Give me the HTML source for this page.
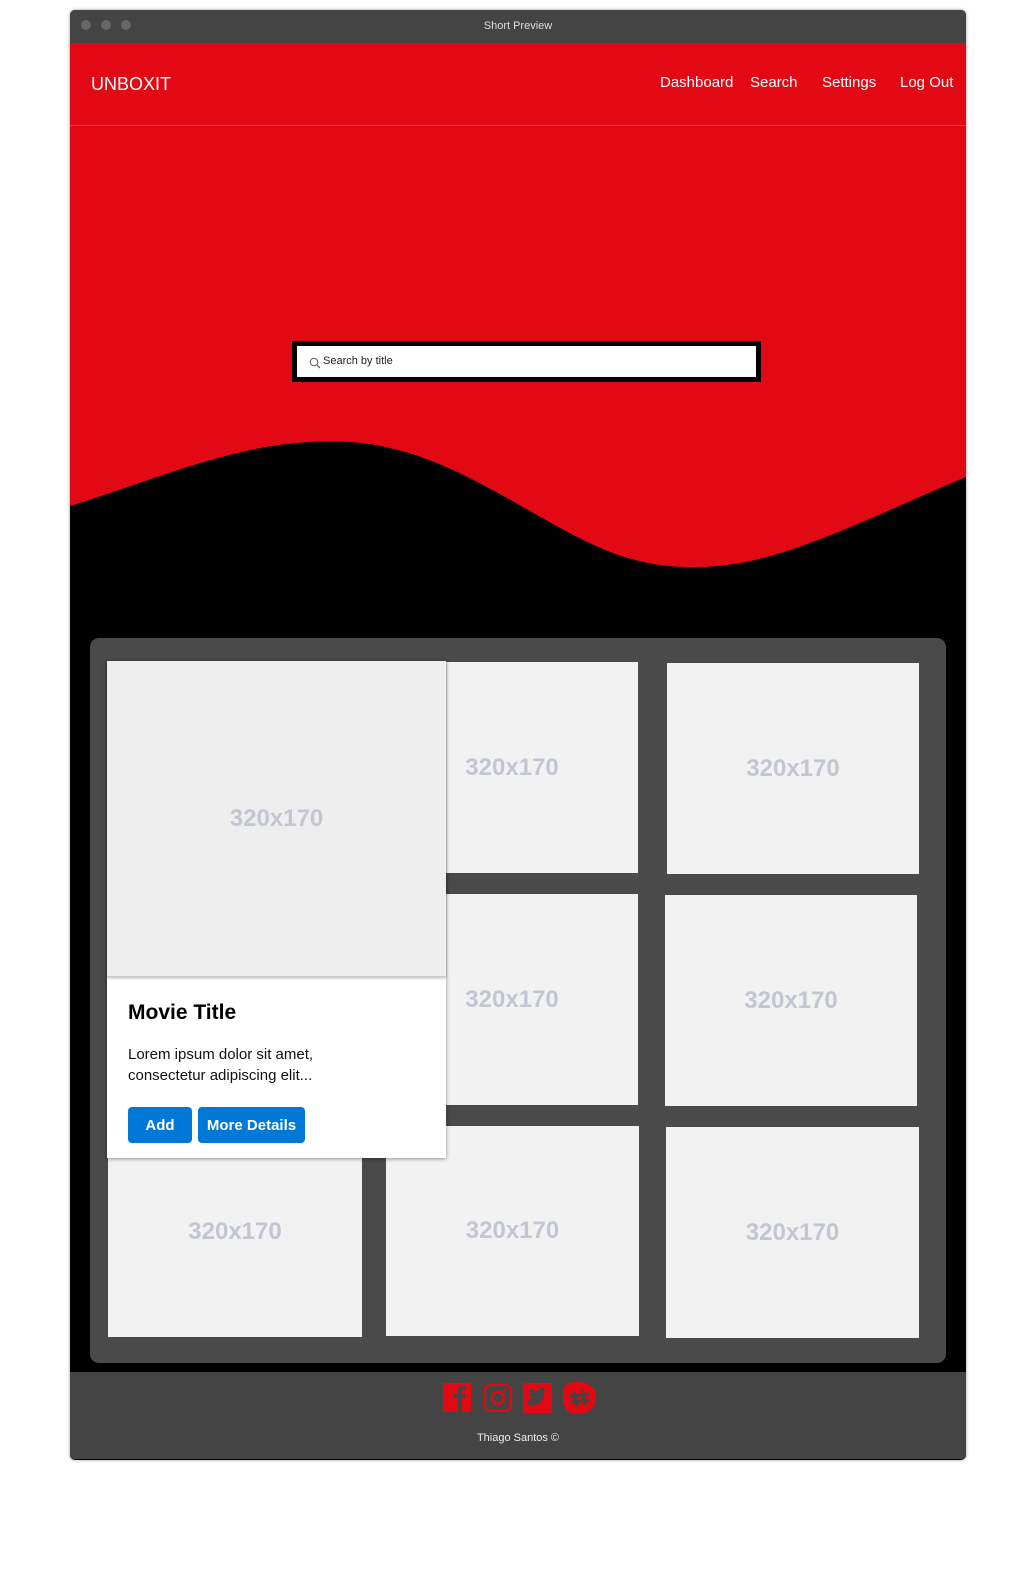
<!DOCTYPE html>
<html><head><meta charset="utf-8"><style>
*{margin:0;padding:0;box-sizing:border-box}
body{width:1021px;height:1575px;background:#fff;position:relative;font-family:"Liberation Sans",sans-serif;overflow:hidden}
.abs{position:absolute}
.frame{left:70px;top:10px;width:896px;height:1450px;background:#000;border-radius:5px;overflow:hidden;box-shadow:0 0 3px rgba(0,0,0,.4)}
.tb{left:0;top:0;width:896px;height:33px;background:#444}
.dot{width:10px;height:10px;border-radius:50%;background:#666;top:10px}
.nav{color:#fff;font-size:15px;top:74px}
.card{background:#f2f2f2;color:#c2c6d0;font-weight:bold;font-size:24px;display:flex;align-items:center;justify-content:center}
.btn{background:#0078d7;color:#fff;font-weight:bold;font-size:15px;border-radius:4px;display:flex;align-items:center;justify-content:center;height:36px;top:1107px}
</style></head><body>
<div class="abs frame">
 <div class="abs tb"></div>
 <div class="abs dot" style="left:11px"></div><div class="abs dot" style="left:31px"></div><div class="abs dot" style="left:51px"></div>
 <div class="abs" style="left:0;top:10px;width:896px;text-align:center;color:#ddd;font-size:11px">Short Preview</div>
 <div class="abs" style="left:0;top:33px;width:896px;height:595px;background:#e30914"></div>
 <div class="abs" style="left:0;top:115px;width:896px;height:1px;background:#c44"></div>
 <svg class="abs" style="left:0;top:420px" width="896" height="210" viewBox="0 0 896 210"><path d="M0 76 C100 45 180 6 280 12 C380 18 460 90 540 122 C600 145 660 140 720 120 C780 100 840 70 896 47 L896 210 L0 210Z" fill="#000"/></svg>
</div>
<div class="abs" style="left:91px;top:74px;color:#fff;font-size:18px">UNBOXIT</div>
<div class="abs nav" style="left:660px">Dashboard</div>
<div class="abs nav" style="left:750px">Search</div>
<div class="abs nav" style="left:822px">Settings</div>
<div class="abs nav" style="left:900px">Log Out</div>
<div class="abs" style="left:292px;top:341px;width:469px;height:41px;border:5px solid #000;background:#fff;font-size:11px;padding:9px 0 0 26px;color:#222">Search by title
 <svg class="abs" style="left:12px;top:11px" width="12" height="12" viewBox="0 0 12 12"><circle cx="5" cy="5" r="3.8" fill="none" stroke="#555" stroke-width="1"/><path d="M8 8 L11 11" stroke="#555" stroke-width="1.2"/></svg></div>
<div class="abs" style="left:90px;top:638px;width:856px;height:725px;background:#4a4a4a;border-radius:9px"></div>
<div class="abs card" style="left:386px;top:662px;width:252px;height:211px">320x170</div>
<div class="abs card" style="left:667px;top:663px;width:252px;height:211px">320x170</div>
<div class="abs card" style="left:386px;top:894px;width:252px;height:211px">320x170</div>
<div class="abs card" style="left:665px;top:895px;width:252px;height:211px">320x170</div>
<div class="abs card" style="left:108px;top:1126px;width:254px;height:211px">320x170</div>
<div class="abs card" style="left:386px;top:1126px;width:253px;height:210px">320x170</div>
<div class="abs card" style="left:666px;top:1127px;width:253px;height:211px">320x170</div>
<div class="abs" style="left:107px;top:661px;width:339px;height:497px;background:#fff;box-shadow:0 1px 4px rgba(0,0,0,.4)"></div>
<div class="abs card" style="left:107px;top:661px;width:339px;height:316px;background:#eee;border-bottom:1px solid #ccc;box-shadow:0 1px 3px rgba(0,0,0,.3)">320x170</div>
<div class="abs" style="left:128px;top:1001px;font-size:21px;font-weight:bold;color:#000">Movie Title</div>
<div class="abs" style="left:128px;top:1044px;font-size:15px;line-height:21px;color:#111">Lorem ipsum dolor sit amet,<br>consectetur adipiscing elit...</div>
<div class="abs btn" style="left:128px;width:64px">Add</div>
<div class="abs btn" style="left:198px;width:107px">More Details</div>
<div class="abs" style="left:70px;top:1372px;width:896px;height:87px;background:#444;border-radius:0 0 4px 4px"></div>
<svg class="abs" style="left:443px;top:1380px" width="155" height="35" viewBox="0 0 155 35">
 <rect x="0" y="3" width="28" height="29" fill="#e30914"/><path d="M15 32 V18 H11 V14 H15 V10 C15 7 17 6 20 6 H23 V10 H20 C19 10 19 11 19 12 V14 H23 L22 18 H19 V32Z" fill="#444"/>
 <rect x="42" y="5" width="26" height="26" rx="6" fill="none" stroke="#e30914" stroke-width="2"/><circle cx="55" cy="18" r="6" fill="none" stroke="#e30914" stroke-width="2.5"/><circle cx="62" cy="10" r="1.5" fill="#e30914"/>
 <rect x="80" y="3" width="29" height="30" rx="2" fill="#e30914"/><path d="M85 24 C92 27 102 23 101 12 L104 10 L101 10 L101 8 C99 7 96 8 95 11 C91 11 88 9 87 8 C86 11 87 13 89 14 L86 14 C87 16 88 17 90 17 C89 19 87 20 85 20Z" fill="#444"/>
 <path d="M124 4 C135 -1 155 3 153 18 C152 32 138 36 128 33 C118 30 118 7 124 4Z" fill="#e30914"/><path d="M131 11 L134 27 M139 9 L142 25 M127 16 L146 14 M128 22 L147 20" stroke="#444" stroke-width="3"/>
</svg>
<div class="abs" style="left:0;top:1432px;width:1036px;text-align:center;color:#eee;font-size:11px">Thiago Santos ©</div>
</body></html>
